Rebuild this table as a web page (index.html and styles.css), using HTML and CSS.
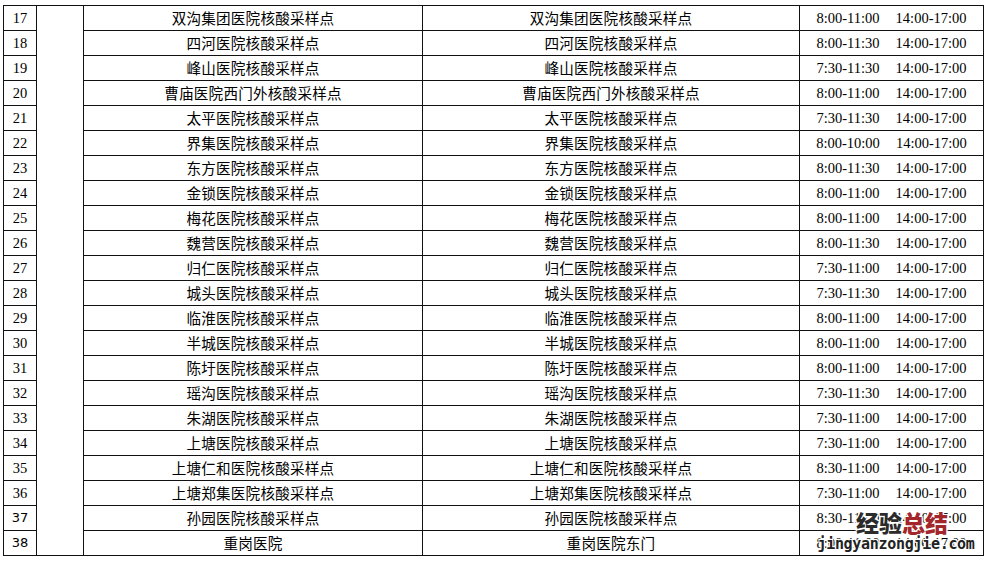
FILE: index.html
```html
<!DOCTYPE html>
<html>
<head>
<meta charset="utf-8">
<link rel="stylesheet" href="styles.css">
</head>
<body>
<div class="page">
<table class="grid">
<colgroup><col class="c-no"><col class="c-blank"><col class="c-name"><col class="c-loc"><col class="c-time"></colgroup>
<tbody>
<tr><td class="no">17</td><td class="blank" rowspan="22"></td><td class="cn">双沟集团医院核酸采样点</td><td class="cn">双沟集团医院核酸采样点</td><td class="time"><span>8:00-11:00</span><span>14:00-17:00</span></td></tr>
<tr><td class="no">18</td><td class="cn">四河医院核酸采样点</td><td class="cn">四河医院核酸采样点</td><td class="time"><span>8:00-11:30</span><span>14:00-17:00</span></td></tr>
<tr><td class="no">19</td><td class="cn">峰山医院核酸采样点</td><td class="cn">峰山医院核酸采样点</td><td class="time"><span>7:30-11:30</span><span>14:00-17:00</span></td></tr>
<tr><td class="no">20</td><td class="cn">曹庙医院西门外核酸采样点</td><td class="cn">曹庙医院西门外核酸采样点</td><td class="time"><span>8:00-11:00</span><span>14:00-17:00</span></td></tr>
<tr><td class="no">21</td><td class="cn">太平医院核酸采样点</td><td class="cn">太平医院核酸采样点</td><td class="time"><span>7:30-11:30</span><span>14:00-17:00</span></td></tr>
<tr><td class="no">22</td><td class="cn">界集医院核酸采样点</td><td class="cn">界集医院核酸采样点</td><td class="time"><span>8:00-10:00</span><span>14:00-17:00</span></td></tr>
<tr><td class="no">23</td><td class="cn">东方医院核酸采样点</td><td class="cn">东方医院核酸采样点</td><td class="time"><span>8:00-11:30</span><span>14:00-17:00</span></td></tr>
<tr><td class="no">24</td><td class="cn">金锁医院核酸采样点</td><td class="cn">金锁医院核酸采样点</td><td class="time"><span>8:00-11:00</span><span>14:00-17:00</span></td></tr>
<tr><td class="no">25</td><td class="cn">梅花医院核酸采样点</td><td class="cn">梅花医院核酸采样点</td><td class="time"><span>8:00-11:00</span><span>14:00-17:00</span></td></tr>
<tr><td class="no">26</td><td class="cn">魏营医院核酸采样点</td><td class="cn">魏营医院核酸采样点</td><td class="time"><span>8:00-11:30</span><span>14:00-17:00</span></td></tr>
<tr><td class="no">27</td><td class="cn">归仁医院核酸采样点</td><td class="cn">归仁医院核酸采样点</td><td class="time"><span>7:30-11:00</span><span>14:00-17:00</span></td></tr>
<tr><td class="no">28</td><td class="cn">城头医院核酸采样点</td><td class="cn">城头医院核酸采样点</td><td class="time"><span>7:30-11:30</span><span>14:00-17:00</span></td></tr>
<tr><td class="no">29</td><td class="cn">临淮医院核酸采样点</td><td class="cn">临淮医院核酸采样点</td><td class="time"><span>8:00-11:00</span><span>14:00-17:00</span></td></tr>
<tr><td class="no">30</td><td class="cn">半城医院核酸采样点</td><td class="cn">半城医院核酸采样点</td><td class="time"><span>8:00-11:00</span><span>14:00-17:00</span></td></tr>
<tr><td class="no">31</td><td class="cn">陈圩医院核酸采样点</td><td class="cn">陈圩医院核酸采样点</td><td class="time"><span>8:00-11:00</span><span>14:00-17:00</span></td></tr>
<tr><td class="no">32</td><td class="cn">瑶沟医院核酸采样点</td><td class="cn">瑶沟医院核酸采样点</td><td class="time"><span>7:30-11:30</span><span>14:00-17:00</span></td></tr>
<tr><td class="no">33</td><td class="cn">朱湖医院核酸采样点</td><td class="cn">朱湖医院核酸采样点</td><td class="time"><span>7:30-11:00</span><span>14:00-17:00</span></td></tr>
<tr><td class="no">34</td><td class="cn">上塘医院核酸采样点</td><td class="cn">上塘医院核酸采样点</td><td class="time"><span>7:30-11:00</span><span>14:00-17:00</span></td></tr>
<tr><td class="no">35</td><td class="cn">上塘仁和医院核酸采样点</td><td class="cn">上塘仁和医院核酸采样点</td><td class="time"><span>8:30-11:00</span><span>14:00-17:00</span></td></tr>
<tr><td class="no">36</td><td class="cn">上塘郑集医院核酸采样点</td><td class="cn">上塘郑集医院核酸采样点</td><td class="time"><span>7:30-11:00</span><span>14:00-17:00</span></td></tr>
<tr><td class="no sans">37</td><td class="cn">孙园医院核酸采样点</td><td class="cn">孙园医院核酸采样点</td><td class="time"><span>8:30-11:00</span><span>14:00-17:00</span></td></tr>
<tr><td class="no sans">38</td><td class="cn">重岗医院</td><td class="cn">重岗医院东门</td><td class="time"><span>8:00-11:00</span><span>14:00-17:00</span></td></tr>
</tbody>
</table>
<div class="watermark">
<div class="wm-title"><span class="wm-dark">经验</span><span class="wm-red">总结</span></div>
<div class="wm-url">jingyanzongjie.com</div>
</div>
</div>
</body>
</html>
```
FILE: styles.css
```css
html, body {
  margin: 0;
  padding: 0;
  background: #fff;
}
.page {
  position: relative;
  width: 986px;
  height: 561px;
  padding: 5px 0 0 3px;
  box-sizing: border-box;
}
.grid {
  border-collapse: collapse;
  table-layout: fixed;
  width: 980px;
  color: #000;
}
.c-no { width: 33px; }
.c-blank { width: 47px; }
.c-name { width: 339px; }
.c-loc { width: 377px; }
.c-time { width: 184px; }
.grid td {
  border: 1px solid #111;
  padding: 0;
  height: 24px;
  text-align: center;
  vertical-align: middle;
  white-space: nowrap;
  line-height: 20px;
}
.no {
  font-family: "Liberation Serif", serif;
  font-size: 14.5px;
}
.no.sans {
  font-family: "DejaVu Sans", "Liberation Sans", sans-serif;
  font-size: 13px;
}
.cn {
  font-family: "Noto Sans CJK SC", sans-serif;
  font-size: 14.6px;
  letter-spacing: 0.2px;
}
.time {
  font-family: "Liberation Serif", serif;
  font-size: 14.5px;
}
.time span + span {
  margin-left: 16px;
}
.watermark {
  position: absolute;
  left: 812px;
  top: 509px;
  width: 168px;
  text-align: center;
}
.wm-title {
  font-family: "Noto Sans CJK SC", sans-serif;
  font-weight: 900;
  font-size: 23px;
  line-height: 27px;
  padding-left: 12px;
  text-shadow: 1px 1px 0 #fff, -1px -1px 0 #fff, 1px -1px 0 #fff, -1px 1px 0 #fff, 0 0 3px #fff;
}
.wm-dark { color: #2b2b2b; }
.wm-red { color: #a3262a; }
.wm-url {
  font-family: "DejaVu Sans Mono", monospace;
  font-size: 15px;
  line-height: 16px;
  letter-spacing: -0.3px;
  color: #222;
  font-weight: 700;
  text-shadow: 1px 1px 0 #fff, -1px -1px 0 #fff, 1px -1px 0 #fff, -1px 1px 0 #fff;
}
```
